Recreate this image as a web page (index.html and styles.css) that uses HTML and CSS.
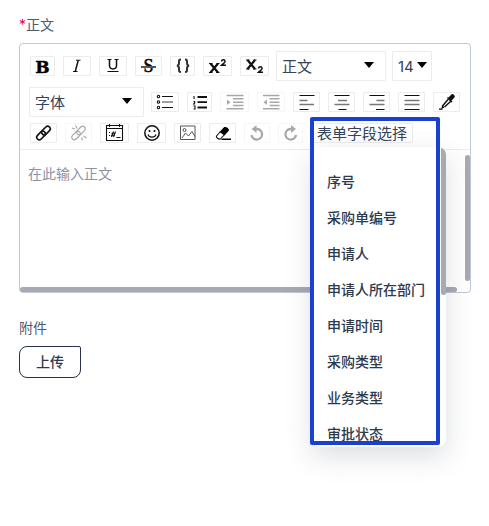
FILE: index.html
```html
<!DOCTYPE html>
<html lang="zh-CN">
<head>
<meta charset="utf-8">
<title>正文</title>
<link rel="stylesheet" href="styles.css">
</head>
<body>
<div class="label"><span class="star">*</span>正文</div>
<div class="editor">
  <div class="toolbar">
    <div class="row row1">
      <span class="btn w25 bold">B</span>
      <span class="btn w28"><svg width="20" height="20" viewBox="0 0 20 20"><path class="mid" d="M11.200 4.500L8.300 15.300"/><path d="M9 4.300h4.500M6 15.500h4.500"/></svg></span>
      <span class="btn w28"><svg width="20" height="20" viewBox="0 0 20 20"><path class="mid" d="M6.500 4v5.500c0 4.500 7 4.500 7 0V4"/><path d="M4.500 3.500h4M11.500 3.500h4M4.500 15.500h11"/></svg></span>
      <span class="btn w27 struck">S<i></i></span>
      <span class="btn w25"><svg width="20" height="20" viewBox="0 0 20 20"><path class="brace" d="M8 3.500C5.500 3.500 6 5 6 7.200c0 1.600-.5 2.200-2 2.500 1.500.3 2 .9 2 2.500 0 2.500-.5 3.800 2 3.800M12 3.500c2.500 0 2 1.500 2 3.700 0 1.600.5 2.200 2 2.500-1.500.3-2 .9-2 2.500 0 2.500.5 3.800-2 3.800"/></svg></span>
      <span class="btn w29"><svg width="20" height="20" viewBox="0 0 20 20"><path class="thick" d="M2.500 7.500l7.500 9M10 7.500l-7.500 9"/><path d="M1 7.500h3.500M8.500 7.500h3M1 16.500h3.500M8 16.500h3.500"/><path class="mid" d="M13.500 5.500c.5-2.500 4-2 3.500.2-.3 1.300-2 2-3.500 3.500h4.500"/></svg></span>
      <span class="btn w29"><svg width="20" height="20" viewBox="0 0 20 20"><path class="thick" d="M2.500 4l7.500 9M10 4l-7.500 9"/><path d="M1 4h3.500M8.500 4h3M1 13h3.500M8 13h3.500"/><path class="mid" d="M13.500 12.500c.5-2.500 4-2 3.500.2-.3 1.300-2 2-3.500 3.500h4.500"/></svg></span>
      <span class="select heading">正文<i class="caret"></i></span>
      <span class="select size">14<i class="caret"></i></span>
    </div>
    <div class="row row2">
      <span class="select font">字体<i class="caret"></i></span>
      <span class="btn w28"><svg width="20" height="20" viewBox="0 0 20 20"><circle cx="3.500" cy="4.500" r="1.200"/><circle cx="3.500" cy="10" r="1.200"/><circle cx="3.500" cy="15.500" r="1.200"/><path d="M7 4.500h11M7 15.500h11"/><path class="rule" d="M7 10h11"/></svg></span>
      <span class="btn w25"><svg width="20" height="20" viewBox="0 0 20 20"><path class="olist" d="M7.500 5h9.500M7.500 10.200h9.500M7.500 15.500h9.500"/><path d="M4 4v3M3.500 9.500h1.200v1l-1 1.500h1.500M3.500 14h1.500v3h-1.500"/></svg></span>
      <span class="btn w29 off"><svg width="20" height="20" viewBox="0 0 20 20"><path class="mid" d="M1.500 3.500h17M8 6.800h10.500M8 10.200h10.500M8 13.500h10.500M1.500 16.800h17"/><path class="solid" d="M2 7.500l3.500 2.700L2 13z"/></svg></span>
      <span class="btn w28 off"><svg width="20" height="20" viewBox="0 0 20 20"><path class="mid" d="M2 3.500h16.500M8.500 6.800h10M8.500 10.200h10M8.500 13.500h10M2 16.800h16.500"/><path class="solid" d="M6 7.500l-3.500 2.700L6 13z"/></svg></span>
      <span class="btn w27"><svg width="20" height="20" viewBox="0 0 20 20"><path d="M2.500 3.500h15M2.500 17.500h9"/><path class="rule" d="M2.500 8.500h8M2.500 12.500h14.500"/></svg></span>
      <span class="btn w27"><svg width="20" height="20" viewBox="0 0 20 20"><path d="M2.500 3.500h15M6.500 17.500h8"/><path class="rule" d="M6 8.500h9M2.500 12.500h15"/></svg></span>
      <span class="btn w27"><svg width="20" height="20" viewBox="0 0 20 20"><path d="M2.500 3.500h15M9 17.500h8.500"/><path class="rule" d="M9.500 8.500h8M2.500 12.500h15"/></svg></span>
      <span class="btn w27"><svg width="20" height="20" viewBox="0 0 20 20"><path d="M2.500 3.500h15M2.500 17.500h15"/><path class="rule" d="M2.500 8.500h15M2.500 12.500h15"/></svg></span>
      <span class="btn w27"><svg width="20" height="20" viewBox="0 0 20 20"><path class="fat" d="M13.500 6.500l2-2"/><path class="mid" d="M10.500 5.500l4.500 4.500M11 7.500l-5.500 6.500M13.500 9.500L7.500 15"/><path class="solid" d="M5 13l2.500 2.500-3 1.200zM2 16.500h3.500v1.200H2z"/></svg></span>
    </div>
    <div class="row row3">
      <span class="btn w27"><svg width="20" height="20" viewBox="0 0 20 20"><g class="link"><rect x="-8.500" y="-2.600" width="10" height="5.200" rx="2.600"/><rect x="-1.500" y="-2.600" width="10" height="5.200" rx="2.600"/></g></svg></span>
      <span class="btn w27 off"><svg width="20" height="20" viewBox="0 0 20 20"><g class="link"><rect x="-8.500" y="-2.600" width="10" height="5.200" rx="2.600"/><rect x="-1.500" y="-2.600" width="10" height="5.200" rx="2.600"/></g><path d="M3 5l3 1M6.500 2.500L8 5.500M12.500 14.500l1 3M14.500 13l3 2"/></svg></span>
      <span class="btn w29"><svg width="20" height="20" viewBox="0 0 20 20"><path d="M1.500 2.500h16v15h-16zM1.500 5.500h16M4.500 1v3M14.500 1v3M4 9.500h1M4 12.500h1M8.500 8.500l-2 5.500M10.500 8.500l-2 5.500M6.500 10.200h4M6 12.200h4M11.500 14.500h4"/></svg></span>
      <span class="btn w29"><svg width="20" height="20" viewBox="0 0 20 20"><circle class="face" cx="10" cy="10" r="7.200"/><path d="M6 11.500c1 3.500 7 3.500 8 0"/><circle class="solid" cx="7.500" cy="8" r="1"/><circle class="solid" cx="12.500" cy="8" r="1"/></svg></span>
      <span class="btn w27"><svg class="fine" width="20" height="20" viewBox="0 0 20 20"><path d="M2.500 3h14.500v13.500H2.500zM4 15l3.500-5 3 3 3.500-4.500 3 5"/><circle cx="6.500" cy="7" r="1.500"/></svg></span>
      <span class="btn w27"><svg width="20" height="20" viewBox="0 0 20 20"><path d="M7.500 8.500l-4 4.500c-.8 1.500 2 3.500 4 3l4-4.500"/><path class="solid" d="M6.500 9L11 4.200c2-.8 5.200 1 5 3.300L11.500 12.500zM9.500 15.500H18V17H8z"/></svg></span>
      <span class="btn w26 off"><svg width="20" height="20" viewBox="0 0 20 20"><path class="turn" d="M9 6h1.500a5.300 5.300 0 1 1-6 6"/><path class="solid" d="M9.500 2v8L4.500 6z"/></svg></span>
      <span class="btn w25 off"><svg width="20" height="20" viewBox="0 0 20 20"><path class="turn" d="M10.500 6H9a5.300 5.300 0 1 0 6 6"/><path class="solid" d="M10 2v8l5-4z"/></svg></span>
      <span class="btn field">表单字段选择</span>
    </div>
  </div>
  <div class="content">在此输入正文</div>
  <i class="vbar"></i><i class="hbar"></i>
  <div class="menu">
    <div>序号</div><div>采购单编号</div><div>申请人</div><div>申请人所在部门</div><div>申请时间</div><div>采购类型</div><div>业务类型</div><div>审批状态</div>
    <i class="menubar"></i>
  </div>
  <div class="frame"></div>
</div>
<div class="label attach">附件</div>
<button class="upload">上传</button>
</body>
</html>
```
FILE: styles.css
```css
* { box-sizing: border-box; }
body {
  margin: 0;
  padding: 15px 19px 0;
  height: 526px;
  overflow: hidden;
  background: #fff;
  color: #34435a;
  font: 14px/20px Inter, "Noto Sans CJK SC", sans-serif;
}
.label { height: 20px; color: #4c5a72; }
.star { color: #e5004b; }
.editor {
  position: relative;
  width: 452px;
  height: 250px;
  margin-top: 8px;
  border: 1px solid #bdc8d8;
  border-radius: 4px;
}
.toolbar { height: 106px; padding-top: 7px; border-bottom: 1px solid #ebecef; }
.row { display: flex; align-items: center; gap: 8px; padding-left: 10px; }
.row1 { height: 30px; }
.row2 { height: 30px; margin-top: 6px; padding-left: 9px; }
.row3 { height: 20px; margin-top: 6px; }
.btn {
  display: flex;
  flex: none;
  align-items: center;
  justify-content: center;
  height: 20px;
  border: 1px solid #ececec;
  border-radius: 1px;
  color: #000;
}
.w25 { width: 25px; }
.w26 { width: 26px; }
.w27 { width: 27px; }
.w28 { width: 28px; }
.w29 { width: 29px; }
.bold { font: bold 17px/18px "DejaVu Serif", serif; padding-top: 2px; -webkit-text-stroke: 0.4px #000; }
.struck { position: relative; font: 18px/18px "Liberation Serif", serif; -webkit-text-stroke: 0.5px #000; }
.struck i { position: absolute; left: 5px; top: 9px; width: 15px; height: 2px; background: #555; }
.off { color: #aaa; border-color: #f6f6f6; }
svg { flex: none; fill: none; stroke: #111; stroke-width: 1.1; }
.off svg { stroke: #a8a8a8; }
.thick { stroke-width: 2.2; }
.mid { stroke-width: 1.5; }
.brace { stroke: #333; stroke-width: 2; }
.rule { stroke: #777; stroke-width: 1.4; }
.olist { stroke-width: 1.8; }
.turn { stroke-width: 2.3; }
.face { stroke-width: 1.5; }
.fat { stroke-width: 4.5; stroke-linecap: round; }
.fine { stroke: #444; stroke-width: 0.9; }
.solid { fill: currentColor; stroke: none; }
.link { transform: translate(9.5px, 10px) rotate(-45deg); stroke-width: 1.6; }
.off .link { stroke-width: 1.2; }
.select {
  display: flex;
  flex: none;
  align-items: center;
  justify-content: space-between;
  height: 30px;
  padding: 2px 11px 0 5px;
  border: 1px solid #ececec;
  border-radius: 1px;
  font-size: 15px;
}
.heading { width: 110px; margin-left: -1px; }
.size { width: 40px; margin-left: -2px; padding-right: 4px; }
.font { width: 115px; margin-right: -1px; }
.caret { border: 5px solid transparent; border-top: 6px solid #000; border-bottom: 0; margin-top: -5px; }
.field { width: 102px; padding-top: 2px; font-size: 15px; color: #34435a; }
.content { padding: 14px 8px; color: #8b93a3; }
.vbar, .hbar, .menubar { position: absolute; background: #a8a9b2; border-radius: 3px; }
.vbar { right: 0; top: 111px; width: 5px; height: 126px; }
.hbar { left: 0; bottom: 0; width: 437px; height: 5px; }
.menu {
  position: absolute;
  left: 292px;
  top: 103px;
  width: 134px;
  height: 300px;
  padding: 17px 0 0 15px;
  overflow: hidden;
  background: #fff;
  border-radius: 8px;
  box-shadow: 0 9px 28px rgba(40, 55, 80, 0.17);
  color: #2c3a4e;
  font-weight: 500;
  line-height: 36px;
}
.menu div { white-space: nowrap; }
.menubar { right: 0; top: 0; width: 5px; height: 148px; }
.frame {
  position: absolute;
  left: 290px;
  top: 73px;
  width: 130px;
  height: 328px;
  border: 4px solid #1a40d2;
  border-radius: 2px;
}
.attach { margin-top: 25px; }
.upload {
  display: block;
  width: 62px;
  height: 32px;
  margin-top: 8px;
  padding: 0;
  background: #fff;
  border: 1px solid #26334a;
  border-radius: 8px 2px 8px 8px;
  color: #2c3a4e;
  font: 500 14px/20px Inter, "Noto Sans CJK SC", sans-serif;
}
```
